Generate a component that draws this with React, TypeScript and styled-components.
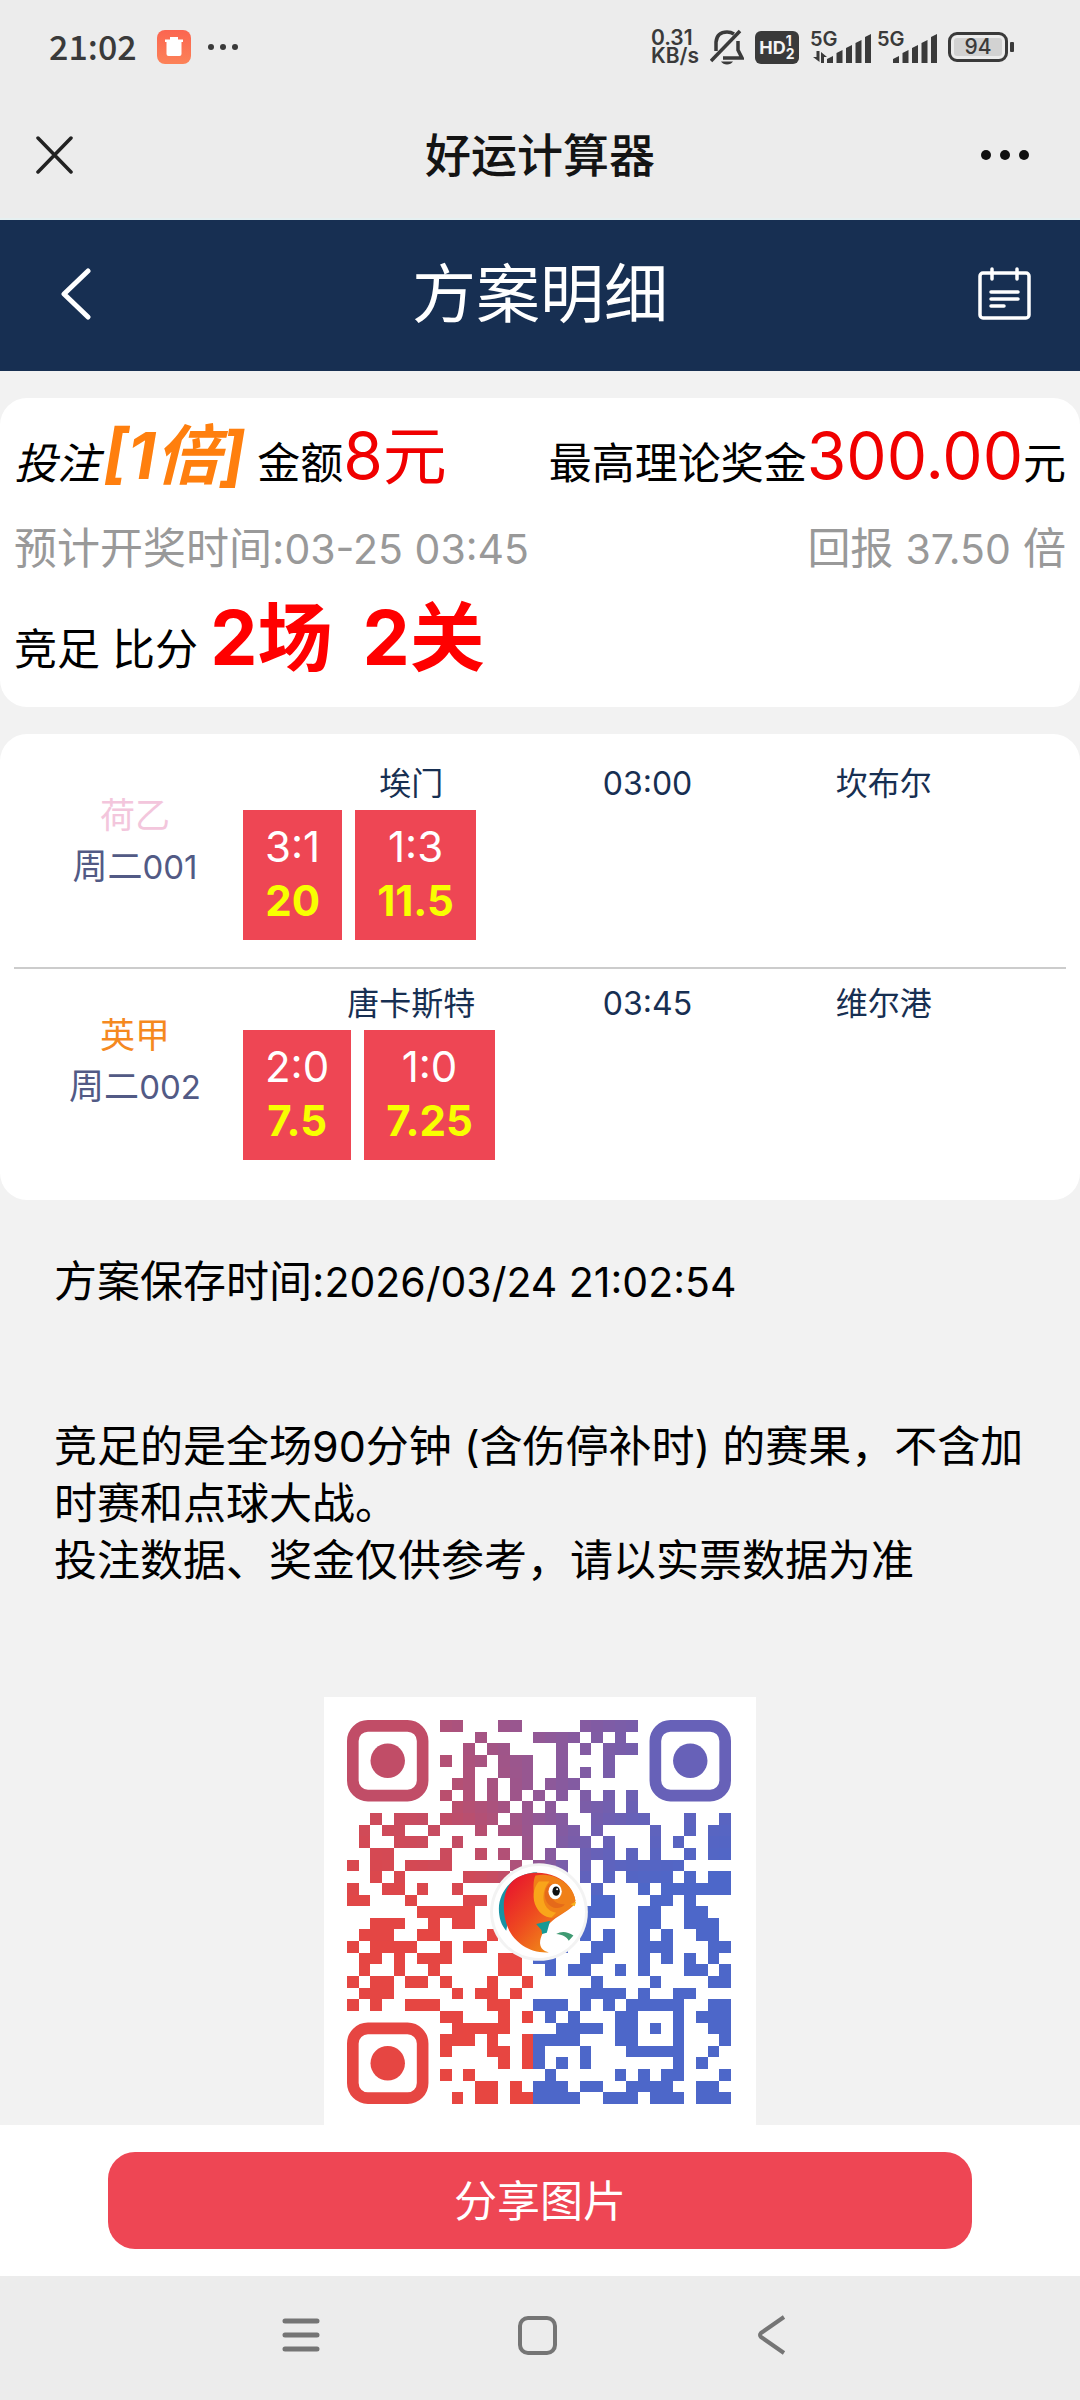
import React from 'react';
import styled, { createGlobalStyle } from 'styled-components';

const sans = `Inter, 'Noto Sans CJK SC', sans-serif`;

const Global = createGlobalStyle`
  * { box-sizing: border-box; }
  body { margin: 0; background: #f2f2f2; font-family: ${sans}; color: #000; }
  button { border: 0; padding: 0; background: none; font: inherit; color: inherit; cursor: pointer; }
  svg { display: block; }
  h1, h2, p { margin: 0; font-weight: 400; }
`;

const Screen = styled.div`
  display: flex;
  flex-direction: column;
  height: 100vh;
`;

/* ---------- phone status bar ---------- */

const StatusBar = styled.div`
  flex: none;
  display: flex;
  align-items: center;
  justify-content: space-between;
  height: 92px;
  padding: 2px 66px 0 49px;
  background: #ececec;
  color: #3a3a3a;
`;

const StatusGroup = styled.div<{ $gap: number }>`
  display: flex;
  align-items: center;
  gap: ${(p) => p.$gap}px;
`;

const Clock = styled.span`
  padding: 0 3px 2px 0;
  font: 500 34px/44px 'Noto Sans CJK SC', sans-serif;
`;

const Speed = styled.span`
  font-size: 21px;
  font-weight: 600;
  line-height: 18px;
  white-space: pre-line;
`;

const HdBadge = styled.span`
  display: flex;
  align-items: center;
  justify-content: center;
  width: 44px;
  height: 33px;
  border-radius: 6px;
  background: #3a3a3a;
  color: #f4f4f4;
  font-size: 18px;
  font-weight: 700;
`;

const HdLines = styled.span`
  display: flex;
  flex-direction: column;
  font-size: 14px;
  line-height: 13px;
`;

const Signal = styled.span<{ $width: number }>`
  position: relative;
  display: flex;
  justify-content: flex-end;
  align-items: flex-end;
  width: ${(p) => p.$width}px;
  height: 32px;
`;

const SignalLabel = styled.span`
  position: absolute;
  left: 0;
  top: 0;
  font-size: 20px;
  font-weight: 600;
  line-height: 16px;
`;

const Battery = styled.span`
  display: flex;
  align-items: center;
  gap: 2px;
  &::after {
    content: '';
    width: 4px;
    height: 10px;
    border-radius: 1px;
    background: #3a3a3a;
  }
`;

const BatteryBody = styled.span`
  display: flex;
  width: 60px;
  height: 30px;
  padding: 3px;
  border: 3px solid #3a3a3a;
  border-radius: 9px;
`;

const BatteryLevel = styled.span`
  flex: 1;
  border-radius: 3px;
  background: #d2d2d2;
  font-size: 21px;
  font-weight: 500;
  line-height: 18px;
  text-align: center;
`;

/* ---------- headers ---------- */

const TitleBar = styled.header`
  flex: none;
  display: grid;
  grid-template-columns: 1fr auto 1fr;
  align-items: center;
  height: 128px;
  padding: 0 50px 0 36px;
  border-bottom: 2px solid #e6f0f1;
  background: #ececec;
  color: #141414;
  > :last-child { justify-self: end; }
`;

const AppTitle = styled.h1`
  padding-left: 14px;
  font-size: 46px;
  font-weight: 500;
  line-height: 60px;
`;

const NavBar = styled(TitleBar)`
  height: 151px;
  padding: 0 49px 4px;
  border: 0;
  background: #172f52;
  color: #fff;
  > :first-child { padding-left: 11px; }
`;

const PageTitle = styled.h2`
  font-size: 64px;
  line-height: 80px;
`;

/* ---------- content ---------- */

const Content = styled.main`
  flex: 1;
  min-height: 0;
  overflow-y: auto;
  scrollbar-width: none;
  padding-top: 27px;
`;

const Card = styled.section`
  margin-bottom: 27px;
  border-radius: 27px;
  background: #fff;
`;

const Summary = styled(Card)`
  padding: 12px 14px 25px;
`;

const SummaryLine = styled.div<{ $height: number; $muted?: boolean }>`
  display: flex;
  align-items: baseline;
  justify-content: space-between;
  height: ${(p) => p.$height}px;
  line-height: ${(p) => p.$height}px;
  font-size: 43px;
  color: ${(p) => (p.$muted ? '#999' : '#000')};
  white-space: pre;
`;

const Amount = styled.span`
  font-size: 64px;
  color: #f00000;
`;

const Multiple = styled.em`
  margin-left: 3px;
  font-size: 65px;
  font-weight: 700;
  color: #ff7f0e;
`;

const Pass = styled.strong`
  display: inline-flex;
  gap: 30px;
  font-size: 75px;
  font-weight: 700;
  color: #ff0000;
`;

const Digits = styled.span`
  font-size: 41px;
`;

const Matches = styled(Card)`
  padding: 14px 14px 40px;
`;

const Match = styled.article`
  display: grid;
  grid-template-columns: 229px 1fr;
  padding: 14px 14px 27px 0;
  & + & {
    padding: 13px 14px 0 0;
    border-top: 2px solid #ccc;
  }
`;

const League = styled.div`
  display: flex;
  flex-direction: column;
  align-items: center;
  padding: 28px 0 0 13px;
  font-size: 35px;
  line-height: 51px;
  color: #525a85;
`;

const LeagueName = styled.span<{ $color: string }>`
  color: ${(p) => p.$color};
`;

const SmallDigits = styled.span`
  font-size: 33px;
`;

const Teams = styled.div`
  display: grid;
  grid-template-columns: repeat(3, 1fr);
  padding: 0 50px;
  font-size: 32px;
  line-height: 44px;
  text-align: center;
  color: #172f52;
`;

const Picks = styled.div`
  display: flex;
  gap: 13px;
  padding-top: 4px;
`;

const Pick = styled.div`
  display: flex;
  flex-direction: column;
  align-items: center;
  height: 130px;
  padding: 10px 22px 0;
  background: #ee4654;
  color: #fff;
  font-size: 42px;
  line-height: 54px;
`;

const Odds = styled.strong`
  color: #f8ff00;
`;

const Notes = styled.section`
  padding: 26px 54px 0;
  font-size: 43px;
  line-height: 57px;
`;

const Saved = styled.p`
  padding-bottom: 107px;
`;

const QrCard = styled.figure`
  width: 432px;
  margin: 108px auto 0;
  padding: 23px 25px 25px 23px;
  background: #fff;
`;

/* ---------- bottom ---------- */

const ActionBar = styled.footer`
  flex: none;
  display: flex;
  justify-content: center;
  padding: 27px 0;
  background: #fff;
`;

const ShareButton = styled.button`
  width: 80%;
  height: 97px;
  padding-bottom: 5px;
  border-radius: 27px;
  background: #ee4654;
  color: #fff;
  font-size: 43px;
`;

const SystemNav = styled.nav`
  flex: none;
  display: flex;
  justify-content: center;
  gap: 196px;
  height: 124px;
  padding: 0 6px 6px 0;
  background: #ececec;
`;

/* ---------- drawings ---------- */

const SignalBars = () => (
  <svg width="44" height="29" fill="#3a3a3a" aria-hidden="true">
    {[7, 13, 18, 23, 29].map((h, i) => (
      <path key={h} d={`M${i * 9.5} 29v-${h - 3}l6-3v${h}z`} />
    ))}
  </svg>
);

const QR_ROWS = [
  '8-9 13-14 20-24',
  '11 16-19 21 23',
  '10 12-13 18 20 22-24',
  '8 10-11 13-15 18 22',
  '10 13-15 18 20 22',
  '9-10 12 14-15 17-19',
  '8 10 12 14 16 18 20 22 24',
  '9-13 15 17 20-22 24',
  '2 4-6 8-12 14-18 21-25 29 32',
  '1 3-4 7 11 13-15 18-19 21 26 29 31-32',
  '1 4-6 9 15 18-20 22 26 28 31-32',
  '2-3 8 11 13 15 17 20-22 24 26 29 31-32',
  '0 2-3 5-8 14 16-18 20 22-28',
  '2 4 10-13 18 20 22 24-27 29 31-32',
  '0 3-4 6 9 21 25 27-32',
  '0-1 5 10-11 21-22 26-27 29',
  '6-10 20-22 25-26 29-30',
  '2-4 7 9-10 20 25-26 29-31',
  '1-3 6-7 12 20 22 25 27 30-31',
  '0 2-5 8 10-11 18 21-22 25-27 31-32',
  '1-2 4 6-8 13-14 16-17 20-21 25 27 29 31',
  '1 4 7 13-14 17 19-20 23 25 29-30 32',
  '0 2-3 5-6 8 12 15 21 26 31-32',
  '1-3 9 11-12 14 20-23 25 28-29',
  '0 2 5-7 12-13 16-18 20 22 24-28 31-32',
  '8-9 13 15 17 19 23-24 28 30-32',
  '9-13 18-21 23-24 26 28 31-32',
  '8-10 12 15-19 23-24 28 32',
  '8 12-13 15-16 20 24-28 31',
  '13 15-16 18 20 28 30',
  '8 10 17 23 25 27-28 32',
  '11-12 14 16-18 20-21 24-27 30-31',
  '9 11-12 14-19 22-24 26-28 30-32',
];

const STOPS: [number, number[]][] = [
  [0, [232, 70, 64]],
  [0.25, [228, 70, 68]],
  [0.375, [193, 77, 103]],
  [0.5, [146, 88, 150]],
  [0.625, [103, 97, 184]],
  [0.72, [77, 103, 201]],
  [1, [77, 103, 201]],
];

/* colour of the sweep that runs clockwise from the bottom of the code */
function sweep(col: number, row: number) {
  const dx = col + 0.5 - 16.5;
  const dy = row + 0.5 - 16.5;
  let t = Math.atan2(-dx, dy) / (2 * Math.PI);
  if (t < 0) t += 1;
  if (dx === 0 && dy > 0) t = 1;
  const i = Math.max(1, STOPS.findIndex(([s]) => t <= s));
  const [a, ca] = STOPS[i - 1];
  const [b, cb] = STOPS[i];
  const k = (t - a) / (b - a);
  return `rgb(${ca.map((v, n) => Math.round(v + (cb[n] - v) * k)).join(',')})`;
}

const CELLS = QR_ROWS.flatMap((line, row) =>
  line.split(' ').flatMap((run) => {
    const [from, to = from] = run.split('-').map(Number);
    return Array.from({ length: to - from + 1 }, (_, i) => ({ col: from + i, row }));
  }),
);

const Finder = ({ x, y }: { x: number; y: number }) => {
  const color = sweep(x + 3, y + 3);
  return (
    <g>
      <rect x={x + 0.5} y={y + 0.5} width="6" height="6" rx="1.3" fill="none" stroke={color} strokeWidth="1" />
      <circle cx={x + 3.5} cy={y + 3.5} r="1.48" fill={color} />
    </g>
  );
};

const QrCode = () => (
  <svg width="384" height="384" viewBox="0 0 33 33" role="img" aria-label="二维码">
    <defs>
      <linearGradient id="fish" x1="0" y1="0" x2="1" y2="1">
        <stop offset="0.1" stopColor="#e8192c" />
        <stop offset="0.45" stopColor="#ee4a20" />
        <stop offset="0.8" stopColor="#f08a18" />
      </linearGradient>
    </defs>
    <g shapeRendering="crispEdges">
      {CELLS.map(({ col, row }) => (
        <rect key={`${col}-${row}`} x={col} y={row} width="1" height="1" fill={sweep(col, row)} />
      ))}
    </g>
    <Finder x={0} y={0} />
    <Finder x={26} y={0} />
    <Finder x={0} y={26} />
    <circle cx="16.5" cy="16.5" r="4.2" fill="#f3f3f3" />
    <circle cx="16.5" cy="16.5" r="3.95" fill="#fff" />
    <g transform="translate(11.45 11.02) scale(0.0286)">
      <path d="M172 72C105 74 56 125 56 182c0 28 8 50 22 66l24-120z" fill="#1793a5" />
      <path d="M100 96c30-24 84-30 128-10 32 14 54 42 58 72l-6 14c-22 22-48 30-72 54-18 20-30 44-28 62 2 14 12 22 26 25-60 4-112-34-128-88-14-50-8-104 22-129z" fill="url(#fish)" />
      <path d="M166 82c22-4 44-2 62 6 34 14 54 42 58 70l-6 14c-26 20-46 30-62 38-30-4-52-28-56-60-2-28-4-52 4-68z" fill="#f08018" />
      <path d="M176 100c-18 20-20 52-8 76 10 20 26 32 46 32l14-14c-24-4-38-24-38-46 0-20 6-36 18-48z" fill="#f9a51a" />
      <path d="M206 108c-18 20-16 52 6 66 16 10 34 6 42-6-22 2-38-10-42-28-2-12 0-22 6-32z" fill="#e56a1a" />
      <ellipse cx="225" cy="130" rx="20" ry="23" fill="#fff" />
      <ellipse cx="228" cy="129" rx="11" ry="14" fill="#111" />
      <circle cx="231" cy="123" r="3" fill="#fff" />
      <path d="M272 168l16-8-4 14z" fill="#f8b21c" />
      <path d="M168 228l42-10-10 36-14 4-2-12z" fill="#159a96" />
      <path d="M228 258c16-10 34-8 52 4l-14 16c-6-12-20-18-38-20z" fill="#3f9a72" />
    </g>
  </svg>
);

/* ---------- data ---------- */

const MATCHES = [
  {
    league: '荷乙', color: '#f3c6dc', day: '周二', no: '001',
    home: '埃门', time: '03:00', away: '坎布尔',
    picks: [['3:1', '20'], ['1:3', '11.5']],
  },
  {
    league: '英甲', color: '#f5891f', day: '周二', no: '002',
    home: '唐卡斯特', time: '03:45', away: '维尔港',
    picks: [['2:0', '7.5'], ['1:0', '7.25']],
  },
];

export default function App() {
  return (
    <Screen>
      <Global />
      <StatusBar>
        <StatusGroup $gap={17}>
          <Clock>21:02</Clock>
          <svg width="34" height="34" aria-hidden="true">
            <defs>
              <linearGradient id="bin" x1="0" y1="0" x2="0" y2="1">
                <stop offset="0" stopColor="#fb6550" />
                <stop offset="1" stopColor="#fc8258" />
              </linearGradient>
            </defs>
            <rect width="34" height="34" rx="8" fill="url(#bin)" />
            <path d="M13 7h8v2.500h5V12h-1.500v12q0 2-2 2h-11q-2 0-2-2V12H8V9.500h5z" fill="#fff" />
          </svg>
          <svg width="30" height="8" fill="#3a3a3a" aria-hidden="true">
            <circle cx="3" cy="4" r="3" /><circle cx="15" cy="4" r="3" /><circle cx="27" cy="4" r="3" />
          </svg>
        </StatusGroup>
        <StatusGroup $gap={11}>
          <Speed>{'0.31\nKB/s'}</Speed>
          <svg width="34" height="36" fill="none" stroke="#3a3a3a" strokeWidth="3.500" aria-hidden="true">
            <path d="M6 22V13Q7 3 17 3q4 0 7 2M28 12v9l4 8H13" />
            <path d="M1 32L30 2" />
            <path d="M11 32.500h12q-2 3-6 3t-6-3z" fill="#3a3a3a" stroke="none" />
          </svg>
          <HdBadge>HD<HdLines><span>1</span><span>2</span></HdLines></HdBadge>
          <StatusGroup $gap={6}>
            <Signal $width={61}>
              <SignalLabel>5G</SignalLabel>
              <svg width="14" height="12" fill="#3a3a3a" aria-hidden="true">
                <path d="M3.500 0h3v11L0 6h3.500zM8 12V1l6 5h-3v6z" />
              </svg>
              <SignalBars />
            </Signal>
            <Signal $width={60}>
              <SignalLabel>5G</SignalLabel>
              <SignalBars />
            </Signal>
          </StatusGroup>
          <Battery><BatteryBody><BatteryLevel>94</BatteryLevel></BatteryBody></Battery>
        </StatusGroup>
      </StatusBar>

      <TitleBar>
        <button aria-label="关闭">
          <svg width="37" height="38" stroke="#222" strokeWidth="3.500" strokeLinecap="round">
            <path d="M2 2l33 34M35 2L2 36" />
          </svg>
        </button>
        <AppTitle>好运计算器</AppTitle>
        <button aria-label="更多">
          <svg width="50" height="12" fill="#111">
            <circle cx="6" cy="6" r="5" /><circle cx="25" cy="6" r="5" /><circle cx="44" cy="6" r="5" />
          </svg>
        </button>
      </TitleBar>

      <NavBar as="div">
        <button aria-label="返回">
          <svg width="32" height="52" fill="none" stroke="#fff" strokeWidth="5" strokeLinecap="round" strokeLinejoin="round">
            <path d="M28 3L4 26l24 23" />
          </svg>
        </button>
        <PageTitle>方案明细</PageTitle>
        <button aria-label="方案列表">
          <svg width="53" height="54" fill="none" stroke="#fff" strokeWidth="3.500" strokeLinecap="round">
            <rect x="2" y="6" width="49" height="45" rx="3" />
            <path d="M14 2v10M39 2v10" />
            <path d="M13 25h27M13 32h27M13 39h13" />
          </svg>
        </button>
      </NavBar>

      <Content>
        <Summary>
          <SummaryLine $height={92}>
            <span><em>投注</em><Multiple>[1倍]</Multiple> 金额<Amount>8元</Amount></span>
            <span>最高理论奖金<Amount>300.00</Amount>元</span>
          </SummaryLine>
          <SummaryLine $height={92} $muted>
            <span>预计开奖时间:<Digits>03-25 03:45</Digits></span>
            <span>回报 <Digits>37.50</Digits> 倍</span>
          </SummaryLine>
          <SummaryLine $height={88}>
            <span>竞足 比分 <Pass><span>2场</span><span>2关</span></Pass></span>
          </SummaryLine>
        </Summary>

        <Matches>
          {MATCHES.map((m) => (
            <Match key={m.no}>
              <League>
                <LeagueName $color={m.color}>{m.league}</LeagueName>
                <span>{m.day}<SmallDigits>{m.no}</SmallDigits></span>
              </League>
              <div>
                <Teams>
                  <span>{m.home}</span>
                  <span>{m.time}</span>
                  <span>{m.away}</span>
                </Teams>
                <Picks>
                  {m.picks.map(([score, odds]) => (
                    <Pick key={score}><span>{score}</span><Odds>{odds}</Odds></Pick>
                  ))}
                </Picks>
              </div>
            </Match>
          ))}
        </Matches>

        <Notes>
          <Saved>方案保存时间:<Digits>2026/03/24 21:02:54</Digits></Saved>
          <p>竞足的是全场90分钟 (含伤停补时) 的赛果，不含加时赛和点球大战。</p>
          <p>投注数据、奖金仅供参考，请以实票数据为准</p>
        </Notes>

        <QrCard><QrCode /></QrCard>
      </Content>

      <ActionBar>
        <ShareButton>分享图片</ShareButton>
      </ActionBar>

      <SystemNav>
        <button aria-label="最近任务">
          <svg width="40" height="40" stroke="#757575" strokeWidth="5" strokeLinecap="round">
            <path d="M4 6h32M4 20h32M4 34h32" />
          </svg>
        </button>
        <button aria-label="主屏幕">
          <svg width="40" height="40" fill="none" stroke="#757575" strokeWidth="4">
            <rect x="3" y="3" width="35" height="35" rx="8" />
          </svg>
        </button>
        <button aria-label="后退">
          <svg width="40" height="40" fill="none" stroke="#757575" strokeWidth="4" strokeLinejoin="round">
            <path d="M31 2L8 18q-2 2 0 4l23 16" />
          </svg>
        </button>
      </SystemNav>
    </Screen>
  );
}
